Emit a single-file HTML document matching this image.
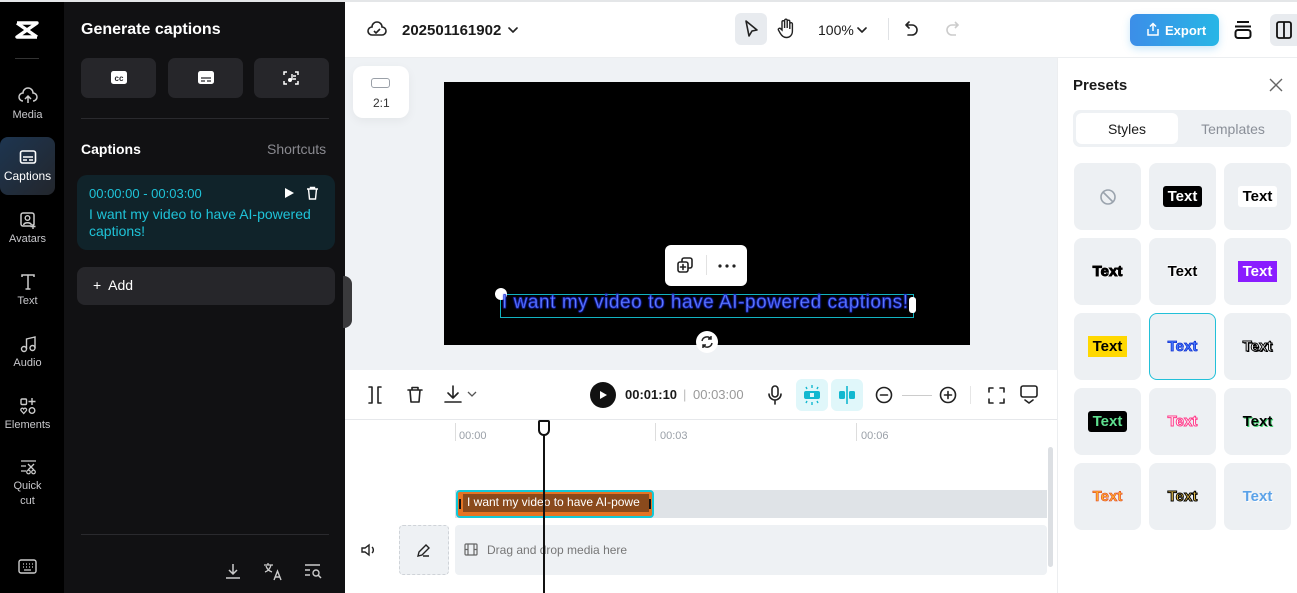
<!DOCTYPE html>
<html><head><meta charset="utf-8"><style>
*{box-sizing:border-box;margin:0;padding:0}
body{width:1297px;height:593px;overflow:hidden;font-family:"Liberation Sans",sans-serif;background:#fff;position:relative}
.a{position:absolute}
.rail{left:0;top:2px;width:64px;height:591px;background:#000}
.ri{position:absolute;left:0;width:55px;text-align:center;color:#c8c8cc;font-size:11px}
.ri svg{display:block;margin:0 auto 4px}
.panel{left:64px;top:2px;width:281px;height:591px;background:#111113}
.gbtn{position:absolute;top:56px;width:75px;height:40px;background:#26262a;border-radius:7px}
.pr{position:absolute;width:67px;height:67px;background:#edf0f3;border-radius:8px;display:flex;align-items:center;justify-content:center;font-weight:bold;font-size:15px}
.ic{stroke:#222;fill:none;stroke-width:1.6;stroke-linecap:round;stroke-linejoin:round}
</style></head><body>
<div class="a" style="left:0;top:0;width:1297px;height:2px;background:#e4e6e8"></div>
<!-- rail -->
<div class="a rail">
 <svg class="a" style="left:14px;top:18px" width="26" height="20" viewBox="0 0 26 20"><path d="M3 3h20L3 17h20" stroke="#fff" stroke-width="3.4" fill="none" stroke-linejoin="round"/><path d="M3 3 L23 17" stroke="#fff" stroke-width="3.4"/></svg>
 <div class="a" style="left:15px;top:56px;width:24px;height:1px;background:#333"></div>
 <div class="ri" style="top:85px"><svg width="20" height="18" viewBox="0 0 20 18"><path d="M5 14a4 4 0 0 1 0-8 5 5 0 0 1 10 0 4 4 0 0 1 0 8M10 16V9m-3 3l3-3 3 3" stroke="#ccc" stroke-width="1.5" fill="none"/></svg>Media</div>
 <div class="a" style="left:0;top:135px;width:55px;height:58px;border-radius:8px;background:linear-gradient(135deg,#1d3550,#23262c)"></div>
 <div class="ri" style="top:147px;color:#fff"><svg width="18" height="16" viewBox="0 0 18 16"><rect x="1.5" y="2" width="15" height="12" rx="2" stroke="#fff" stroke-width="1.6" fill="none"/><path d="M4 8h10M4 11h4M10 11h4" stroke="#fff" stroke-width="1.4"/></svg><span style="font-size:12px">Captions</span></div>
 <div class="ri" style="top:209px"><svg width="18" height="18" viewBox="0 0 18 18"><rect x="2" y="2" width="13" height="13" rx="2" stroke="#ccc" stroke-width="1.5" fill="none"/><circle cx="8.5" cy="7" r="2.3" stroke="#ccc" stroke-width="1.4" fill="none"/><path d="M4.5 14c1-3 7-3 8 0M14 13v5M11.5 15.5h5" stroke="#ccc" stroke-width="1.4" fill="none"/></svg>Avatars</div>
 <div class="ri" style="top:271px"><svg width="18" height="18" viewBox="0 0 18 18"><path d="M3 4V2h12v2M9 2v14M6.5 16h5" stroke="#ccc" stroke-width="1.5" fill="none"/></svg>Text</div>
 <div class="ri" style="top:333px"><svg width="18" height="18" viewBox="0 0 18 18"><circle cx="5" cy="14" r="2.5" stroke="#ccc" stroke-width="1.4" fill="none"/><circle cx="13.5" cy="13" r="2.5" stroke="#ccc" stroke-width="1.4" fill="none"/><path d="M7.5 14V4l8.5-2v11" stroke="#ccc" stroke-width="1.4" fill="none"/></svg>Audio</div>
 <div class="ri" style="top:395px"><svg width="18" height="18" viewBox="0 0 18 18"><rect x="2" y="2" width="5.5" height="5.5" rx="1" stroke="#ccc" stroke-width="1.4" fill="none"/><path d="M13 1v7M9.5 4.5h7" stroke="#ccc" stroke-width="1.4"/><circle cx="13" cy="13.5" r="2.8" stroke="#ccc" stroke-width="1.4" fill="none"/><path d="M4.7 16.5l-2.7-3a1.5 1.5 0 0 1 2.7-1.5 1.5 1.5 0 0 1 2.7 1.5z" stroke="#ccc" stroke-width="1.3" fill="none"/></svg>Elements</div>
 <div class="ri" style="top:457px;line-height:15px"><svg width="18" height="16" viewBox="0 0 18 16"><path d="M2 2h15M2 7h5M2 12h5" stroke="#ccc" stroke-width="1.3"/><path d="M9 5l6 6M15 5l-6 6" stroke="#ccc" stroke-width="1.3"/><circle cx="9.5" cy="13" r="1.8" stroke="#ccc" stroke-width="1.2" fill="none"/><circle cx="14.5" cy="13" r="1.8" stroke="#ccc" stroke-width="1.2" fill="none"/></svg>Quick<br>cut</div>
 <svg class="a" style="left:18px;top:557px" width="19" height="15" viewBox="0 0 19 15"><rect x="1" y="1" width="17" height="13" rx="2" stroke="#ccc" stroke-width="1.4" fill="none"/><path d="M5 5h1M8 5h1M11 5h1M14 5h1M5 8h1M8 8h1M11 8h1M14 8h1M6 11h7" stroke="#ccc" stroke-width="1.3"/></svg>
</div>
<!-- panel -->
<div class="a panel">
 <div class="a" style="left:17px;top:19px;font-size:16px;font-weight:bold;color:#fff">Generate captions</div>
 <div class="gbtn" style="left:17px"><svg style="position:absolute;left:29px;top:12px" width="18" height="15"><rect x="1" y="1" width="16" height="13" rx="2.5" fill="#fff"/><text x="9" y="11" font-size="8" font-weight="bold" text-anchor="middle" fill="#26262a" font-family="Liberation Sans">cc</text></svg></div>
 <div class="gbtn" style="left:104px"><svg style="position:absolute;left:29px;top:12px" width="18" height="15"><rect x="1" y="1" width="16" height="13" rx="2.5" fill="#fff"/><path d="M4 8h10M4 11h4M10 11h4" stroke="#26262a" stroke-width="1.3"/></svg></div>
 <div class="gbtn" style="left:190px"><svg style="position:absolute;left:29px;top:12px" width="16" height="16" viewBox="0 0 16 16"><path d="M1 5V2h3M12 2h3v3M15 11v3h-3M4 14H1v-3" stroke="#fff" stroke-width="1.5" fill="none"/><circle cx="7" cy="10" r="2" fill="#fff"/><path d="M9 10V4M10 6h3M10 9h3" stroke="#fff" stroke-width="1.4"/></svg></div>
 <div class="a" style="left:17px;top:116px;width:248px;height:1px;background:#2a2a2e"></div>
 <div class="a" style="left:17px;top:139px;font-size:14px;font-weight:bold;color:#fff">Captions</div>
 <div class="a" style="left:203px;top:139px;font-size:14px;color:#8a8a90">Shortcuts</div>
 <div class="a" style="left:13px;top:173px;width:258px;height:75px;background:#10232a;border-radius:10px"></div>
 <div class="a" style="left:25px;top:184px;font-size:13px;color:#1fc3d8">00:00:00 - 00:03:00</div>
 <svg class="a" style="left:220px;top:185px" width="10" height="12"><path d="M1 1l9 5-9 5z" fill="#fff"/></svg>
 <svg class="a" style="left:242px;top:184px" width="13" height="14" viewBox="0 0 13 14"><path d="M1 3h11M4.5 3V1.5h4V3M2.5 3l1 10h6l1-10" stroke="#fff" stroke-width="1.4" fill="none"/></svg>
 <div class="a" style="left:25px;top:204px;font-size:14px;line-height:17px;color:#1fc3d8;width:240px">I want my video to have AI-powered captions!</div>
 <div class="a" style="left:13px;top:265px;width:258px;height:38px;background:#26262a;border-radius:8px;color:#fff;font-size:14px;padding:10px 0 0 16px">+&nbsp; Add</div>
 <div class="a" style="left:17px;top:532px;width:248px;height:1px;background:#2a2a2e"></div>
 <svg class="a" style="left:160px;top:560px" width="18" height="18" viewBox="0 0 18 18"><path d="M9 2v10M5 8l4 4 4-4M2 16h14" stroke="#ccc" stroke-width="1.5" fill="none"/></svg>
 <svg class="a" style="left:199px;top:560px" width="20" height="19" viewBox="0 0 20 19"><path d="M1 3h9M5 1v2M3 4c1 3 3 5 6 6M8 3c-1 4-3 6-6 7" stroke="#ccc" stroke-width="1.3" fill="none"/><path d="M11 18l3.5-9 3.5 9M12.3 15h4.5" stroke="#ccc" stroke-width="1.4" fill="none"/></svg>
 <svg class="a" style="left:240px;top:561px" width="19" height="16" viewBox="0 0 19 16"><path d="M1 2h15M1 7h5M1 12h5" stroke="#ccc" stroke-width="1.4"/><circle cx="12" cy="10" r="3" stroke="#ccc" stroke-width="1.4" fill="none"/><path d="M14 12l3 3" stroke="#ccc" stroke-width="1.5"/></svg>
</div>
<!-- top bar -->
<div class="a" style="left:345px;top:2px;width:952px;height:56px;background:#fff;border-bottom:1px solid #eceef0"></div>
<svg class="a" style="left:367px;top:20px" width="20" height="18" viewBox="0 0 20 18"><path d="M5 15a4 4 0 0 1 0-8 5 5 0 0 1 10 0 4 4 0 0 1 0 8z" stroke="#222" stroke-width="1.6" fill="none"/><path d="M7 11l2 2 4-4" stroke="#222" stroke-width="1.6" fill="none"/></svg>
<div class="a" style="left:402px;top:22px;font-size:15px;font-weight:bold;color:#1a1a1a">202501161902</div>
<svg class="a" style="left:508px;top:27px" width="10" height="7"><path d="M1 1l4 4 4-4" class="ic"/></svg>
<div class="a" style="left:735px;top:13px;width:32px;height:32px;background:#e8ebef;border-radius:6px"></div>
<svg class="a" style="left:743px;top:19px" width="16" height="20" viewBox="0 0 16 20"><path d="M3 2l11 9-5 1-3 5z" class="ic"/></svg>
<svg class="a" style="left:777px;top:18px" width="18" height="21" viewBox="0 0 18 21"><path d="M5 12V4a1.3 1.3 0 0 1 2.6 0v6V2.5a1.3 1.3 0 0 1 2.6 0V10V3.5a1.3 1.3 0 0 1 2.6 0V11V6a1.3 1.3 0 0 1 2.6 0v7c0 4-2.5 6.5-6 6.5-3 0-4.5-1.5-6-4l-2-3.5a1.3 1.3 0 0 1 2.2-1.3z" stroke="#222" stroke-width="1.4" fill="none"/></svg>
<div class="a" style="left:818px;top:22px;font-size:14px;color:#1a1a1a">100%</div>
<svg class="a" style="left:857px;top:27px" width="10" height="7"><path d="M1 1l4 4 4-4" class="ic"/></svg>
<div class="a" style="left:888px;top:18px;width:1px;height:22px;background:#e0e2e5"></div>
<svg class="a" style="left:904px;top:21px" width="16" height="18" viewBox="0 0 16 18"><path d="M5 1L2 4l3 3M2 4h6a5 5 0 0 1 0 10H4" class="ic"/></svg>
<svg class="a" style="left:944px;top:21px" width="16" height="18" viewBox="0 0 16 18"><path d="M11 1l3 3-3 3M14 4H8a5 5 0 0 0 0 10h4" stroke="#ccc" stroke-width="1.6" fill="none"/></svg>
<div class="a" style="left:1130px;top:14px;width:89px;height:32px;border-radius:7px;background:linear-gradient(90deg,#3c8ee8,#27b6e6);color:#fff;font-size:13px;font-weight:bold;padding:9px 0 0 35px;box-shadow:0 3px 8px rgba(40,160,230,.25)">Export</div>
<svg class="a" style="left:1146px;top:22px" width="14" height="15" viewBox="0 0 14 15"><path d="M7 9V2M4 4.5L7 1.5l3 3M2 7v6h10V7" stroke="#fff" stroke-width="1.5" fill="none"/></svg>
<svg class="a" style="left:1233px;top:20px" width="20" height="20" viewBox="0 0 20 20"><path d="M4 2h12M2 6.5h16" stroke="#111" stroke-width="2"/><rect x="2.5" y="10" width="15" height="8" rx="2.5" stroke="#111" stroke-width="2" fill="none"/></svg>
<div class="a" style="left:1270px;top:14px;width:32px;height:32px;background:#e8ebef;border-radius:6px"></div>
<svg class="a" style="left:1276px;top:21px" width="16" height="18"><rect x="1" y="1" width="14" height="16" rx="2" stroke="#111" stroke-width="1.8" fill="none"/><path d="M8 1v16" stroke="#111" stroke-width="1.8"/></svg>
<!-- canvas -->
<div class="a" style="left:345px;top:58px;width:712px;height:312px;background:#eff2f5"></div>
<div class="a" style="left:353px;top:66px;width:56px;height:52px;background:#fff;border-radius:10px;box-shadow:0 3px 10px rgba(0,0,0,.05)"></div>
<div class="a" style="left:371px;top:78px;width:19px;height:10px;border:1.5px solid #9aa0a8;border-radius:3px"></div>
<div class="a" style="left:373px;top:96px;font-size:12px;color:#333">2:1</div>
<div class="a" style="left:343px;top:276px;width:9px;height:52px;background:#3a3a3c;border-radius:0 8px 8px 0"></div>
<div class="a" style="left:444px;top:82px;width:526px;height:263px;background:#000"></div>
<div class="a" style="left:665px;top:245px;width:82px;height:41px;background:#fff;border-radius:6px"></div>
<svg class="a" style="left:677px;top:257px" width="17" height="17" viewBox="0 0 17 17"><rect x="5" y="1" width="10" height="10" rx="2" class="ic"/><rect x="1" y="5" width="10" height="10" rx="2" fill="#fff" stroke="#222" stroke-width="1.6"/><path d="M6 7.5v5M3.5 10h5" class="ic"/></svg>
<div class="a" style="left:706px;top:255px;width:1px;height:20px;background:#e2e2e2"></div>
<svg class="a" style="left:718px;top:264px" width="18" height="4"><circle cx="2" cy="2" r="1.6" fill="#222"/><circle cx="9" cy="2" r="1.6" fill="#222"/><circle cx="16" cy="2" r="1.6" fill="#222"/></svg>
<div class="a" style="left:500px;top:294px;width:414px;height:24px;border:1.5px solid #12b3c0"></div>
<div class="a" style="left:495px;top:288px;width:12px;height:12px;border-radius:50%;background:#fff"></div>
<div class="a" style="left:909px;top:297px;width:7px;height:16px;border-radius:3px;background:#fff"></div>
<div class="a" style="left:502px;top:292px;font-size:19px;letter-spacing:0.55px;color:#6a88ff;-webkit-text-stroke:0.7px #2233cc;text-shadow:0 0 2px #1a2aff;white-space:nowrap">I want my video to have AI-powered captions!</div>
<div class="a" style="left:696px;top:331px;width:22px;height:22px;border-radius:50%;background:#fff"></div>
<svg class="a" style="left:700px;top:335px" width="14" height="14" viewBox="0 0 14 14"><path d="M2 6a5 5 0 0 1 9-2M12 8a5 5 0 0 1-9 2M11 1v3H8M3 13v-3h3" stroke="#222" stroke-width="1.5" fill="none"/></svg>
<!-- right panel -->
<div class="a" style="left:1057px;top:58px;width:240px;height:535px;background:#fff;border-left:1px solid #eceef0"></div>
<div class="a" style="left:1073px;top:77px;font-size:15px;font-weight:bold;color:#1a1a1a">Presets</div>
<svg class="a" style="left:1269px;top:78px" width="14" height="14"><path d="M1 1l12 12M13 1L1 13" stroke="#666" stroke-width="1.4"/></svg>
<div class="a" style="left:1073px;top:110px;width:218px;height:37px;background:#eef1f4;border-radius:7px"></div>
<div class="a" style="left:1076px;top:113px;width:102px;height:31px;background:#fff;border-radius:6px;text-align:center;padding-top:8px;font-size:14px;color:#1a1a1a">Styles</div>
<div class="a" style="left:1180px;top:121px;width:106px;text-align:center;font-size:14px;color:#8a8f98">Templates</div>
<div class="pr" style="left:1074px;top:163px"><svg width="18" height="18"><circle cx="9" cy="9" r="7" stroke="#9aa3ad" stroke-width="1.6" fill="none"/><path d="M4 4l10 10" stroke="#9aa3ad" stroke-width="1.6"/></svg></div>
<div class="pr" style="left:1149px;top:163px"><span style="background:#000;color:#fff;padding:2px 5px;border-radius:3px">Text</span></div>
<div class="pr" style="left:1224px;top:163px"><span style="background:#fff;color:#000;padding:2px 5px;border-radius:3px">Text</span></div>
<div class="pr" style="left:1074px;top:238px"><span style="color:#000;-webkit-text-stroke:1px #000;text-shadow:1px 1px 0 #fff,-1px -1px 0 #fff,1px -1px 0 #fff,-1px 1px 0 #fff">Text</span></div>
<div class="pr" style="left:1149px;top:238px"><span style="color:#000;text-shadow:1px 1px 0 #fff,-1px -1px 0 #fff">Text</span></div>
<div class="pr" style="left:1224px;top:238px"><span style="background:#8a1cff;color:#fff;padding:2px 5px">Text</span></div>
<div class="pr" style="left:1074px;top:313px"><span style="background:#ffd800;color:#000;padding:2px 5px">Text</span></div>
<div class="pr" style="left:1149px;top:313px;border:1px solid #22c0d8"><span style="color:#4a7dff;-webkit-text-stroke:0.8px #1030d0;text-shadow:0 0 2px #fff">Text</span></div>
<div class="pr" style="left:1224px;top:313px"><span style="color:#fff;-webkit-text-stroke:1px #000;text-shadow:1px 1px 0 #000">Text</span></div>
<div class="pr" style="left:1074px;top:388px"><span style="background:#000;color:#5fe08f;padding:2px 5px;border-radius:3px">Text</span></div>
<div class="pr" style="left:1149px;top:388px"><span style="color:#fff;-webkit-text-stroke:1px #ff3b8a">Text</span></div>
<div class="pr" style="left:1224px;top:388px"><span style="color:#000;text-shadow:1px 1px 0 #3ccf6a">Text</span></div>
<div class="pr" style="left:1074px;top:463px"><span style="color:#ffb030;-webkit-text-stroke:0.6px #e04020">Text</span></div>
<div class="pr" style="left:1149px;top:463px"><span style="color:#f0c850;-webkit-text-stroke:1px #000">Text</span></div>
<div class="pr" style="left:1224px;top:463px"><span style="color:#5ba2e8;text-shadow:1px 1px 0 #fff">Text</span></div>
<!-- timeline toolbar -->
<div class="a" style="left:345px;top:370px;width:712px;height:50px;background:#fff;border-bottom:1px solid #e6e8eb"></div>
<svg class="a" style="left:367px;top:386px" width="16" height="18" viewBox="0 0 16 18"><path d="M2 1h3v16H2M14 1h-3v16h3" class="ic"/></svg>
<svg class="a" style="left:407px;top:386px" width="16" height="17" viewBox="0 0 16 17"><path d="M1 4h14M5 4V1.5h6V4M3 4l1 12h8l1-12" class="ic"/></svg>
<svg class="a" style="left:444px;top:385px" width="20" height="19" viewBox="0 0 20 19"><path d="M9 1v12M4 8l5 5 5-5M1 17h16" class="ic"/></svg>
<svg class="a" style="left:467px;top:391px" width="10" height="7"><path d="M1 1l4 4 4-4" stroke="#555" stroke-width="1.3" fill="none"/></svg>
<div class="a" style="left:590px;top:382px;width:26px;height:26px;border-radius:50%;background:#111"></div>
<svg class="a" style="left:599px;top:390px" width="9" height="10"><path d="M1 1l7 4-7 4z" fill="#fff"/></svg>
<div class="a" style="left:625px;top:387px;font-size:13px;font-weight:bold;color:#1a1a1a">00:01:10</div>
<div class="a" style="left:683px;top:387px;font-size:13px;color:#bbb">|</div>
<div class="a" style="left:693px;top:387px;font-size:13px;color:#999">00:03:00</div>
<svg class="a" style="left:767px;top:385px" width="16" height="20" viewBox="0 0 16 20"><rect x="5" y="1" width="6" height="11" rx="3" class="ic"/><path d="M2 9a6 6 0 0 0 12 0M8 15v4" class="ic"/></svg>
<div class="a" style="left:796px;top:379px;width:32px;height:32px;background:#e0f7fa;border-radius:6px"></div>
<svg class="a" style="left:801px;top:384px" width="22" height="22" viewBox="0 0 22 22"><rect x="3" y="7" width="16" height="8" rx="2" fill="#12b8d0"/><rect x="9" y="9" width="4" height="4" fill="#e0f7fa"/><path d="M11 1v3M11 18v3M5 3l1 2M17 3l-1 2M5 19l1-2M17 19l-1-2" stroke="#12b8d0" stroke-width="1.4"/></svg>
<div class="a" style="left:831px;top:379px;width:32px;height:32px;background:#e0f7fa;border-radius:6px"></div>
<svg class="a" style="left:836px;top:384px" width="22" height="22" viewBox="0 0 22 22"><rect x="3" y="7" width="6" height="8" rx="1.5" fill="#12b8d0"/><rect x="13" y="7" width="6" height="8" rx="1.5" fill="#12b8d0"/><path d="M11 2v18" stroke="#12b8d0" stroke-width="1.6"/></svg>
<svg class="a" style="left:875px;top:386px" width="18" height="18"><circle cx="9" cy="9" r="7.5" class="ic"/><path d="M5.5 9h7" class="ic"/></svg>
<div class="a" style="left:902px;top:395px;width:30px;height:1px;background:#ccc"></div>
<svg class="a" style="left:939px;top:386px" width="18" height="18"><circle cx="9" cy="9" r="7.5" class="ic"/><path d="M5.5 9h7M9 5.5v7" class="ic"/></svg>
<div class="a" style="left:970px;top:386px;width:1px;height:18px;background:#e6e6e6"></div>
<svg class="a" style="left:988px;top:387px" width="17" height="17" viewBox="0 0 17 17"><path d="M1 5V1h4M12 1h4v4M16 12v4h-4M5 16H1v-4" class="ic"/></svg>
<svg class="a" style="left:1020px;top:385px" width="18" height="19" viewBox="0 0 18 19"><rect x="1" y="1" width="16" height="11" rx="2" class="ic"/><path d="M5 15l4 3 4-3" class="ic"/></svg>
<!-- timeline -->
<div class="a" style="left:455px;top:423px;width:1px;height:18px;background:#ddd"></div>
<div class="a" style="left:655px;top:423px;width:1px;height:18px;background:#ddd"></div>
<div class="a" style="left:856px;top:423px;width:1px;height:18px;background:#ddd"></div>
<div class="a" style="left:459px;top:430px;font-size:11px;color:#9aa0a8">00:00</div>
<div class="a" style="left:660px;top:430px;font-size:11px;color:#9aa0a8">00:03</div>
<div class="a" style="left:861px;top:430px;font-size:11px;color:#9aa0a8">00:06</div>
<div class="a" style="left:455px;top:490px;width:592px;height:28px;background:#dfe3e7"></div>
<div class="a" style="left:456px;top:490px;width:198px;height:28px;background:#e57424;border:2.5px solid #12c8d8;border-radius:4px"></div>
<div class="a" style="left:463px;top:494px;width:186px;height:18px;background:#8a4a1c"></div>
<div class="a" style="left:467px;top:495px;font-size:12px;color:#fff;white-space:nowrap;width:181px;overflow:hidden">I want my video to have AI-powe</div>
<div class="a" style="left:459px;top:499px;width:2px;height:10px;background:#111"></div>
<div class="a" style="left:649px;top:499px;width:2px;height:10px;background:#111"></div>
<svg class="a" style="left:361px;top:543px" width="16" height="14" viewBox="0 0 16 14"><path d="M1 5h3l4-3v10L4 9H1zM11 4a4 4 0 0 1 0 6" stroke="#222" stroke-width="1.4" fill="none"/></svg>
<div class="a" style="left:399px;top:525px;width:50px;height:50px;background:#eef1f4;border:1px dashed #cfd3d8;border-radius:4px"></div>
<svg class="a" style="left:416px;top:543px" width="15" height="15" viewBox="0 0 15 15"><path d="M2 13l1-4 7-7 3 3-7 7zM7 13h6" stroke="#222" stroke-width="1.4" fill="none"/></svg>
<div class="a" style="left:455px;top:525px;width:592px;height:50px;background:#eef1f4;border-radius:4px"></div>
<svg class="a" style="left:464px;top:543px" width="14" height="13"><rect x="1" y="1" width="12" height="11" rx="1" stroke="#666" stroke-width="1.2" fill="none"/><path d="M4 1v11M10 1v11M1 6.5h3M10 6.5h3" stroke="#666" stroke-width="1.2"/></svg>
<div class="a" style="left:487px;top:543px;font-size:12px;color:#777">Drag and drop media here</div>
<div class="a" style="left:1048px;top:447px;width:5px;height:120px;background:#dcdfe3;border-radius:3px"></div>
<div class="a" style="left:543px;top:434px;width:2px;height:159px;background:#111"></div>
<div class="a" style="left:538px;top:420px;width:12px;height:16px;border:2px solid #111;border-radius:2px 2px 6px 6px;background:#fff"></div>
</body></html>
